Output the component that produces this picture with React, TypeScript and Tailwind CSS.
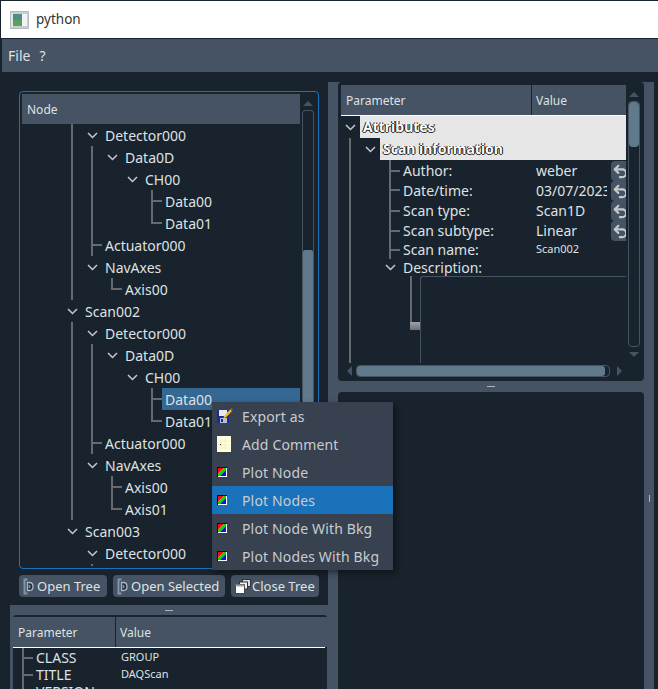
import React from "react";
import { Undo2 } from "lucide-react";

const FONT = "font-['Noto_Sans','Open_Sans',sans-serif]";

function Chevron() {
  return (
    <svg width="11" height="7" viewBox="0 0 11 7" className="shrink-0">
      <path d="M1 1 L5.5 5.5 L10 1" fill="none" stroke="#C4C8CB" strokeWidth="1.5" />
    </svg>
  );
}

const DEPTHS = ["pl-[43px]", "pl-[63px]", "pl-[83px]", "pl-[103px]", "pl-[123px]"];

type Node = { t: string; d: number; open?: boolean; sel?: boolean };

const NODES: Node[] = [
  { t: "Detector000", d: 1, open: true },
  { t: "Data0D", d: 2, open: true },
  { t: "CH00", d: 3, open: true },
  { t: "Data00", d: 4 },
  { t: "Data01", d: 4 },
  { t: "Actuator000", d: 1 },
  { t: "NavAxes", d: 1, open: true },
  { t: "Axis00", d: 2 },
  { t: "Scan002", d: 0, open: true },
  { t: "Detector000", d: 1, open: true },
  { t: "Data0D", d: 2, open: true },
  { t: "CH00", d: 3, open: true },
  { t: "Data00", d: 4, sel: true },
  { t: "Data01", d: 4 },
  { t: "Actuator000", d: 1 },
  { t: "NavAxes", d: 1, open: true },
  { t: "Axis00", d: 2 },
  { t: "Axis01", d: 2 },
  { t: "Scan003", d: 0, open: true },
  { t: "Detector000", d: 1, open: true },
];

function TreeLines() {
  const p = (x: number, y1: number, y2: number) => `M${x - 22} ${y1 - 124}V${y2 - 124}`;
  const h = (x1: number, x2: number, y: number) => `M${x1 - 22} ${y - 124}H${x2 - 22}`;
  const d = [
    p(72, 124, 300),
    p(72, 322, 520),
    p(92, 146, 256),
    h(92, 102, 245),
    p(92, 344, 454),
    h(92, 102, 443),
    p(92, 564, 570),
    p(152, 190, 224),
    h(152, 162, 201),
    h(152, 162, 223),
    p(152, 388, 422),
    h(152, 162, 399),
    h(152, 162, 421),
    p(112, 278, 290),
    h(112, 122, 289),
    p(112, 476, 510),
    h(112, 122, 487),
    h(112, 122, 509),
  ].join("");
  return (
    <svg width="278" height="443" className="absolute left-0 top-0">
      <path d={d} stroke="#636A70" strokeWidth="2" fill="none" />
    </svg>
  );
}

function TreeRow({ n }: { n: Node }) {
  return (
    <div className={`flex h-[22px] w-[278px] shrink-0 items-stretch ${DEPTHS[n.d]}`}>
      <div className="flex w-[17px] shrink-0 items-center justify-start pl-[2px]">
        {n.open ? <Chevron /> : null}
      </div>
      <div className={`flex flex-1 items-center pl-[3px] pt-[2px] ${n.sel ? "bg-[#346792]" : ""}`}>{n.t}</div>
    </div>
  );
}

function OpenIcon() {
  return (
    <svg width="12" height="17" viewBox="0 0 12 17" className="shrink-0">
      <path d="M4.5 1.5H1.5V15.5H4.5" fill="none" stroke="#7F97AC" strokeWidth="2" />
      <path d="M4.5 4.5H6.5C8.5 4.5 10 6.2 10 8.5C10 10.8 8.5 12.5 6.5 12.5H4.5Z" fill="#25313D" stroke="#A9B8C6" strokeWidth="1.3" />
      <path d="M6.5 7V10" stroke="#7F97AC" strokeWidth="1.5" />
    </svg>
  );
}

function CloseIcon() {
  return (
    <svg width="16" height="15" viewBox="0 0 16 15" className="shrink-0">
      <rect x="7.5" y="0.5" width="8" height="7" fill="#D9DDE0" stroke="#333" />
      <rect x="4.5" y="3" width="8" height="7" fill="#EDEFF0" stroke="#333" />
      <rect x="0.5" y="5.5" width="9" height="9" fill="#FFFFFF" stroke="#444" />
      <rect x="0.5" y="5.5" width="9" height="2" fill="#9AA3AA" />
    </svg>
  );
}

function Btn({ w, icon, label, gap }: { w: string; icon: React.ReactNode; label: string; gap: string }) {
  return (
    <div className={`flex h-[22px] items-center whitespace-nowrap rounded-[4px] bg-[#455364] pl-[4px] text-[13px] ${gap} ${w}`}>
      {icon}
      <span className="pt-[1px]">{label}</span>
    </div>
  );
}

function VArrow({ down }: { down?: boolean }) {
  return (
    <svg width="10" height="5" viewBox="0 0 10 5" className="shrink-0">
      <path d={down ? "M0 0H10L5 5Z" : "M0 5H10L5 0Z"} fill="#455364" />
    </svg>
  );
}

function HArrow({ right }: { right?: boolean }) {
  return (
    <svg width="5" height="10" viewBox="0 0 5 10" className="shrink-0">
      <path d={right ? "M0 0V10L5 5Z" : "M5 0V10L0 5Z"} fill="#455364" />
    </svg>
  );
}

function Undo() {
  return (
    <div className="flex h-[20px] w-[15px] shrink-0 items-center overflow-hidden rounded-l-[4px] bg-[#455364] pl-[1px]">
      <Undo2 size={17} strokeWidth={3} color="#C6C9CC" className="shrink-0" />
    </div>
  );
}

function PRow({ name, value, small, h = "h-[20px]" }: { name: string; value: string; small?: boolean; h?: string }) {
  return (
    <div className={`flex shrink-0 items-center ${h}`}>
      <div className="w-[195px] shrink-0 pl-[62px]">{name}</div>
      <div className={`w-[71px] shrink-0 overflow-hidden whitespace-nowrap ${small ? "mb-[3px] text-[11px]" : ""}`}>{value}</div>
      <div className="w-[4px] shrink-0" />
      {small ? null : <Undo />}
    </div>
  );
}

function GroupRow({ pl, label }: { pl: string; label: string }) {
  return (
    <div className={`flex h-[22px] shrink-0 items-stretch ${pl}`}>
      <div className="flex w-[19px] shrink-0 items-center justify-center">
        <Chevron />
      </div>
      <div className="flex flex-1 items-center bg-[#E6E6E6] pl-[3px] font-bold text-white [text-shadow:1px_0_0_#111,-1px_0_0_#111,0_1px_0_#333]">
        {label}
      </div>
    </div>
  );
}

function PlotIcon() {
  return (
    <svg width="10" height="10" viewBox="0 0 10 10" className="shrink-0">
      <rect width="10" height="10" fill="#FFFFFF" />
      <path d="M0 0H10V1H1V10H0Z" fill="#101010" />
      <path d="M1 1H7L1 7Z" fill="#F01010" />
      <path d="M7 1H9V3L3 9H1V7Z" fill="#10D010" />
      <path d="M9 3V9H3Z" fill="#1010E0" />
    </svg>
  );
}

function ExportIcon() {
  return (
    <svg width="16" height="16" viewBox="0 0 16 16" className="shrink-0">
      <path d="M0 2H12V15H0Z" fill="#1C2A9C" />
      <rect x="2" y="2" width="8" height="6" fill="#E8E8F0" />
      <rect x="3" y="10" width="7" height="5" fill="#B9BDD0" />
      <rect x="4" y="11" width="2" height="3" fill="#1C2A9C" />
      <path d="M7 8 L13 1.5 L15 3 L9 9.5 L6.5 10Z" fill="#F0C020" />
      <path d="M13 1.5 L15 3 L16 1.5 L14.5 0Z" fill="#D04030" />
    </svg>
  );
}

function NoteIcon() {
  return (
    <svg width="14" height="16" viewBox="0 0 14 16" className="shrink-0">
      <rect width="14" height="16" fill="#FFFFDC" />
      <path d="M4 2V14M8 2V14M1 5H13M1 9H13M1 12H13" stroke="#EFEFC4" strokeWidth="1" />
      <rect x="3" y="8" width="1" height="1" fill="#333" />
    </svg>
  );
}

const MENU: { label: string; icon: React.ReactNode; on?: boolean }[] = [
  { label: "Export as", icon: <ExportIcon /> },
  { label: "Add Comment", icon: <NoteIcon /> },
  { label: "Plot Node", icon: <PlotIcon /> },
  { label: "Plot Nodes", icon: <PlotIcon />, on: true },
  { label: "Plot Node With Bkg", icon: <PlotIcon /> },
  { label: "Plot Nodes With Bkg", icon: <PlotIcon /> },
];

function ContextMenu() {
  return (
    <div className="absolute left-[212px] top-[402px] w-[181px] bg-[#37414F] tracking-[0.15px] text-[#C9CCCF] shadow-[3px_3px_6px_rgba(0,0,0,0.45)]">
      {MENU.map((m) => (
        <div key={m.label} className={`flex h-[28px] items-center ${m.on ? "bg-[#1A72BB]" : ""}`}>
          <div className="flex w-[30px] shrink-0 items-center pl-[5px]">{m.icon}</div>
          <span className="pt-[2px]">{m.label}</span>
        </div>
      ))}
    </div>
  );
}

function AppIcon() {
  return (
    <svg width="19" height="18" viewBox="0 0 19 18" className="shrink-0">
      <rect x="0.5" y="0.5" width="18" height="17" fill="#C9CDD0" stroke="#B8BCBF" />
      <rect x="1" y="2" width="2" height="14" fill="#E4E6E8" />
      <rect x="3" y="3" width="9" height="12" fill="#4E8E86" />
      <rect x="3" y="9" width="9" height="6" fill="#5AA05E" />
      <rect x="12" y="3" width="5" height="12" fill="#F2F3F4" />
    </svg>
  );
}

export default function App() {
  return (
    <div className={`relative flex h-[689px] w-[658px] flex-col overflow-hidden bg-[#19232D] text-[14px] leading-none text-[#DFE1E2] ${FONT}`}>
      <div className="ml-[1px] mt-[1px] flex h-[37px] shrink-0 items-center gap-[7px] bg-white pl-[9px] text-[13.5px] text-[#333]">
        <AppIcon />
        <span>python</span>
      </div>
      <div className="ml-[2px] mt-[1px] flex h-[33px] shrink-0 items-center gap-[9px] bg-[#455364] pl-[6px]">
        <span>File</span>
        <span>?</span>
      </div>

      <div className="flex min-h-0 flex-1">
        {/* left column */}
        <div className="flex w-[328px] shrink-0 flex-col pt-[19px]">
          <div className="ml-[19px] flex h-[478px] w-[300px] shrink-0 rounded-[4px] border border-[#1A72BB] p-[2px]">
            <div className="flex w-[278px] shrink-0 flex-col">
              <div className="flex h-[30px] shrink-0 items-center bg-[#455364] pl-[5px] pt-[2px] text-[12px]">Node</div>
              <div className="relative flex min-h-0 flex-1 flex-col overflow-hidden">
                <TreeLines />
                <div className="relative flex flex-col">
                  {NODES.map((n, i) => (
                    <TreeRow key={i} n={n} />
                  ))}
                </div>
              </div>
            </div>
            <div className="ml-[2px] flex w-[12px] shrink-0 flex-col items-center pt-[7px]">
              <VArrow />
              <div className="mt-[4px] flex w-[12px] flex-1 flex-col overflow-hidden rounded-t-[4px] border border-b-0 border-[#455364]">
                <div className="mt-[139px] h-[260px] w-full shrink-0 rounded-[2px] bg-[#60798B]" />
              </div>
            </div>
          </div>

          <div className="ml-[19px] mt-[6px] flex w-[300px] shrink-0 gap-[6px]">
            <Btn w="w-[88px]" gap="gap-[2px]" icon={<OpenIcon />} label="Open Tree" />
            <Btn w="w-[112px]" gap="gap-[2px]" icon={<OpenIcon />} label="Open Selected" />
            <Btn w="w-[88px]" gap="gap-[1px]" icon={<CloseIcon />} label="Close Tree" />
          </div>

          <div className="ml-[10px] mt-[8px] flex min-h-0 flex-1 flex-col bg-[#455364] pl-[3px] pr-[1px]">
            <div className="flex h-[10px] shrink-0 items-center justify-center">
              <div className="mr-[3px] h-[1px] w-[8px] bg-[#AEB6BD]" />
            </div>
            <div className="flex min-h-0 flex-1 flex-col overflow-hidden rounded-t-[3px] bg-[#19232D] pt-[2px]">
              <div className="flex h-[30px] shrink-0 items-center bg-[#455364] pt-0 text-[12px]">
                <div className="flex h-full w-[103px] items-center border-r border-[#19232D] pl-[5px] pt-[2px]">Parameter</div>
                <div className="flex h-full w-[209px] items-center pl-[4px] pt-[2px]">Value</div>
              </div>
              <div className="h-[1px] w-[312px] shrink-0 bg-white" />
              <div className="relative flex flex-col">
                <svg width="24" height="50" className="absolute left-0 top-0">
                  <path d="M10 0V50M10 10H20M10 27H20" stroke="#636A70" strokeWidth="2" fill="none" />
                </svg>
                {[
                  ["CLASS", "GROUP"],
                  ["TITLE", "DAQScan"],
                  ["VERSION", ""],
                ].map(([a, b]) => (
                  <div key={a} className="flex h-[17px] shrink-0 items-center">
                    <div className="w-[108px] shrink-0 pl-[23px] pt-[2px]">{a}</div>
                    <div className="text-[11px]">{b}</div>
                  </div>
                ))}
              </div>
            </div>
          </div>
        </div>

        {/* right column */}
        <div className="mt-[10px] flex w-[326px] shrink-0 flex-col bg-[#455364] pl-[10px] pr-[10px]">
          <div className="flex h-[299px] shrink-0 flex-col rounded-[4px] bg-[#19232D] pl-[3px] pt-[3px]">
            <div className="flex h-[278px] shrink-0">
              <div className="flex w-[285px] shrink-0 flex-col overflow-hidden">
                <div className="flex h-[30px] shrink-0 items-center bg-[#455364] text-[12px]">
                  <div className="flex h-full w-[191px] items-center border-r border-[#19232D] pl-[5px] pt-[2px]">Parameter</div>
                  <div className="flex h-full flex-1 items-center pl-[4px] pt-[2px]">Value</div>
                </div>
                <div className="h-[1px] shrink-0 bg-white" />
                <div className="relative flex min-h-0 flex-1 flex-col">
                  <svg width="90" height="247" className="absolute left-0 top-0">
                    <path
                      d="M9 22V247M49 44V143M49 55H59M49 74H59M49 95H59M49 115H59M49 134H59"
                      stroke="#636A70"
                      strokeWidth="2"
                      fill="none"
                    />
                  </svg>
                  <div className="relative flex flex-col">
                    <GroupRow pl="" label="Attributes" />
                    <GroupRow pl="pl-[20px]" label="Scan information" />
                    <div className="h-[1px] shrink-0" />
                    <PRow name="Author:" value="weber" />
                    <PRow name="Date/time:" value="03/07/2023" />
                    <PRow name="Scan type:" value="Scan1D" />
                    <PRow name="Scan subtype:" value="Linear" />
                    <PRow name="Scan name:" value="Scan002" small h="h-[18px]" />
                    <div className="flex h-[17px] shrink-0 items-center pl-[40px]">
                      <div className="flex w-[19px] shrink-0 items-center justify-center">
                        <Chevron />
                      </div>
                      <span className="pl-[3px]">Description:</span>
                    </div>
                    <div className="flex h-[87px] shrink-0 pl-[69px]">
                      <div className="flex w-[10px] shrink-0 flex-col pt-[46px]">
                        <div className="h-[8px] w-[10px] bg-gradient-to-b from-[#A0A4A8] to-[#6B7075]" />
                      </div>
                      <div className="flex-1 rounded-tl-[3px] border-l border-t border-[#455364]" />
                    </div>
                    <svg width="2" height="46" className="absolute left-[69px] top-[160px]">
                      <path d="M1 0V46" stroke="#636A70" strokeWidth="2" />
                    </svg>
                  </div>
                </div>
              </div>
              <div className="ml-[2px] flex w-[12px] shrink-0 flex-col items-center pt-[7px]">
                <VArrow />
                <div className="mt-[4px] flex h-[246px] w-[12px] shrink-0 flex-col rounded-[4px] border border-[#455364]">
                  <div className="h-[45px] w-full shrink-0 rounded-[4px] bg-[#60798B]" />
                </div>
                <div className="mt-[5px]">
                  <VArrow down />
                </div>
              </div>
            </div>
            <div className="ml-[6px] mt-[2px] flex h-[12px] w-[275px] shrink-0 items-center">
              <HArrow />
              <div className="ml-[4px] flex h-[12px] w-[254px] shrink-0 rounded-[4px] border border-[#455364]">
                <div className="h-full w-[248px] rounded-[3px] bg-[#60798B]" />
              </div>
              <div className="ml-[7px]">
                <HArrow right />
              </div>
            </div>
          </div>
          <div className="flex h-[11px] shrink-0 items-center justify-center">
            <div className="h-[1px] w-[8px] bg-[#AEB6BD]" />
          </div>
          <div className="relative min-h-0 flex-1 rounded-t-[4px] bg-[#19232D]">
            <div className="absolute left-[311px] top-[103px] h-[7px] w-[1px] bg-[#AEB6BD]" />
          </div>
        </div>
      </div>

      <ContextMenu />
    </div>
  );
}
